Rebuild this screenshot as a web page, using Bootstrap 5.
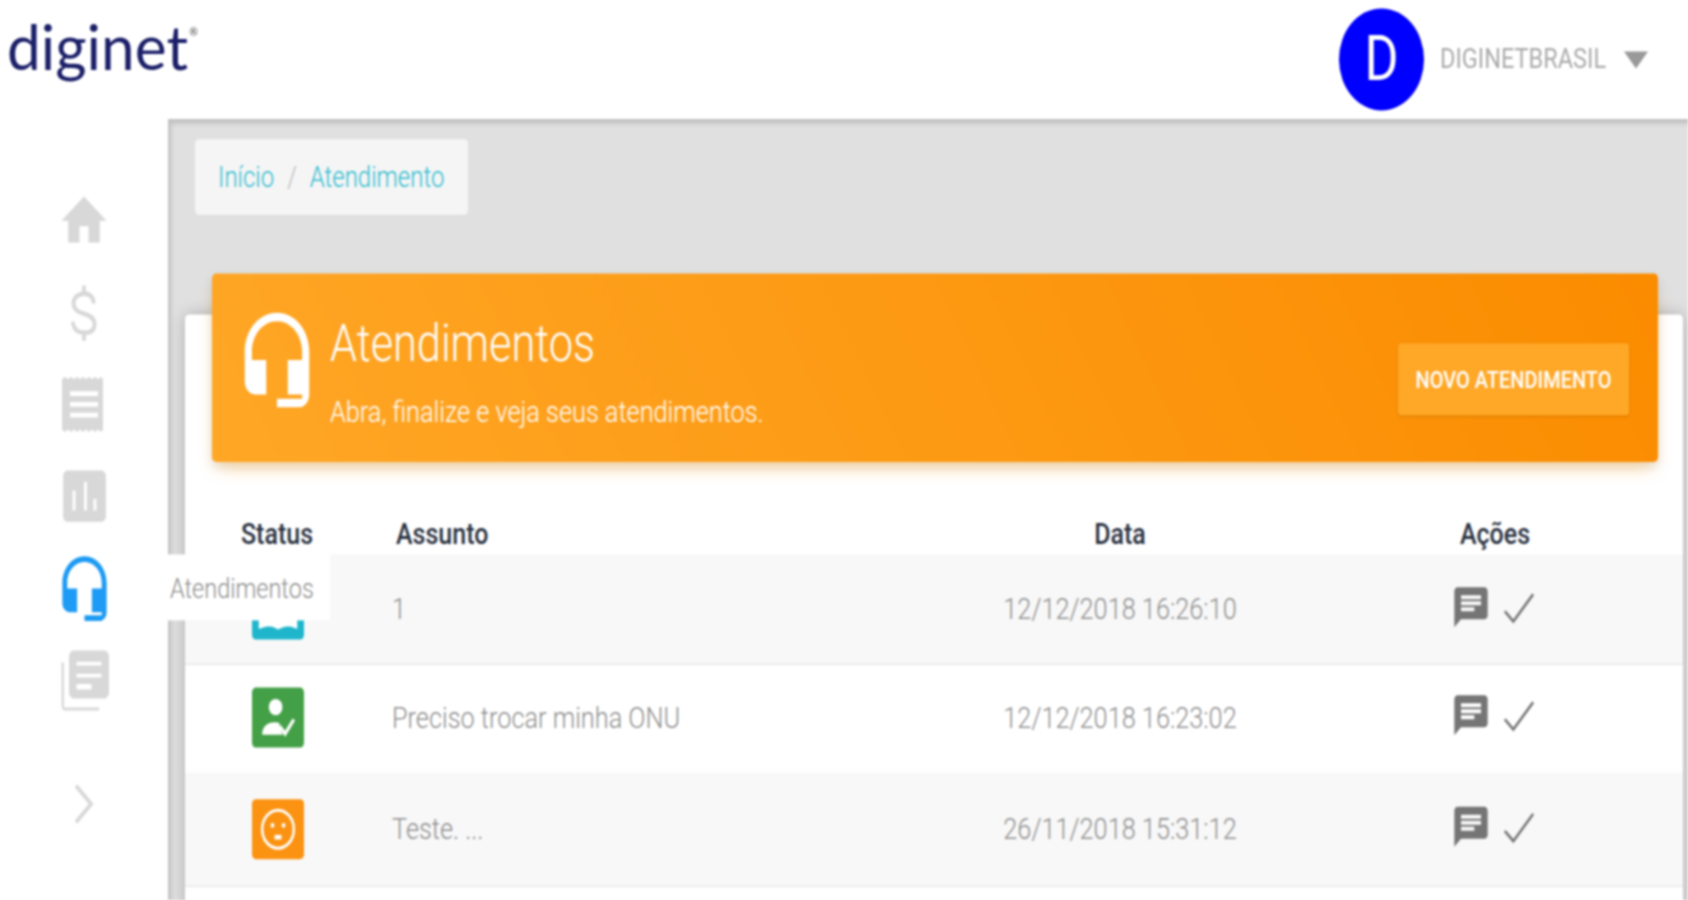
<!doctype html>
<html lang="pt-BR">
<head>
<meta charset="utf-8">
<title>Atendimentos</title>
<link rel="stylesheet" href="https://cdn.jsdelivr.net/npm/bootstrap@5.3.0/dist/css/bootstrap.min.css">
<style>
html,body{height:900px;overflow:hidden;background:#fff;margin:0}
body{font-family:Roboto,"Liberation Sans",sans-serif}
.stage{width:1688px;height:750px;transform:scaleY(1.2);transform-origin:0 0;filter:blur(1px);overflow:hidden;position:relative}
.topbar{height:99px;padding:0 40px 0 7px}
.logo-text{font-family:Lato,"Open Sans",sans-serif;font-weight:400;font-size:52px;line-height:1.2;color:#1b1f68;transform:scaleX(1.16);transform-origin:0 50%;margin-top:-22px;white-space:nowrap}
.logo-reg{font-size:9px;color:#777;vertical-align:28px;font-weight:700;margin-left:1px}
.avatar{width:85px;height:85px;border-radius:50%;background:#00f;color:#fff;font-size:52px;font-weight:400;line-height:85px;text-align:center}
.user-name{font-size:23.5px;font-weight:400;color:#aaa;margin-left:16px;width:165px;white-space:nowrap}
.caret-down{width:0;height:0;border-left:12px solid transparent;border-right:12px solid transparent;border-top:14px solid #999;margin-left:19px}
.side{width:168px;flex:none;padding-top:47px}
.side-slot{height:76.5px;color:#d8d8d8}
.side-slot.active{color:#1e9bf4}
.side-more{margin-top:45px;height:40px;color:#d8d8d8}
.mainarea{background:#e0e0e0;height:651px;padding:17px 5px 0 17px;box-shadow:inset 3px 4px 4px rgba(0,0,0,.14)}
.crumbs{display:inline-flex;background:#f5f5f5;height:63px;align-items:center;margin:0 0 0 10px;padding:0 24px 0 23px;border-radius:4px;font-size:24px;font-weight:300}
.crumbs .breadcrumb-item a{color:#31bcd0;text-decoration:none}
.crumbs .breadcrumb-item+.breadcrumb-item{padding-left:13px}
.crumbs .breadcrumb-item+.breadcrumb-item::before{color:#bbb;padding-right:13px}
.sheet{margin-top:83px;background:#fff;border-radius:4px;height:600px;box-shadow:0 0 14px rgba(0,0,0,.22)}
.hero{position:relative;top:-34px;margin:0 25px 0 27px;height:157px;border-radius:4px;background:linear-gradient(60deg,#ffa726,#fb8c00);box-shadow:0 10px 16px -6px rgba(255,152,0,.4),0 4px 10px rgba(0,0,0,.1);color:#fff;padding:0 29px 0 22px}
.hero-mark{flex:none;margin-bottom:14px}
.hero-copy{padding-top:7.8px;margin-left:10px}
.hero-title{font-size:43.3px;font-weight:300;line-height:1;margin:0 0 22.8px}
.hero-sub{font-size:25.3px;font-weight:300;line-height:1;margin:0;white-space:nowrap}
.hero-btn{background:#ffa726;color:#fff;border:0;border-radius:3px;width:231px;height:60px;font-size:20px;font-weight:500;padding:0;margin-top:18px;box-shadow:0 1px 3px rgba(0,0,0,.1);white-space:nowrap}
.ticket-table{table-layout:fixed;width:100%;margin:8.2px 0 0;--bs-table-bg:transparent}
.ticket-table th{font-size:25px;line-height:35.3px;font-weight:500;color:#2a3242;border:0;padding:0;height:35.3px;vertical-align:middle}
.ticket-table td{font-size:25.3px;font-weight:300;color:#8f8f8f;padding:0;vertical-align:middle;border-bottom:1px solid #e3e3e3;height:91px}
.ticket-table tr.odd td{background:#f8f8f8}
.ticket-table tr.even td{border-bottom-color:#fff;height:90px}
.ticket-table tr.last td{height:95px}
.ticket-table th.head-subject{padding-left:27px}
.ticket-table td.cell-subject{padding-left:23px}
.status-box{width:52px;height:50px;border-radius:4px;margin:0 auto;color:#fff;transform:translateX(1px)}
.status-teal{background:#1fb6cc}.status-green{background:#43a047}.status-orange{background:#fb9211}
.row-actions{gap:11px;padding-right:3px}
.chat-mark{margin-bottom:4px}
.hint{position:absolute;left:168px;top:462px;width:162px;height:55px;background:#fff;color:#8e8e8e;font-size:23.5px;font-weight:300;padding:3px 0 0 2px;z-index:5;white-space:nowrap}
</style>
</head>
<body>
<div class="stage">
  <header class="topbar d-flex align-items-center justify-content-between">
    <div class="logo-text">diginet<span class="logo-reg">®</span></div>
    <div class="d-flex align-items-center">
      <div class="avatar">D</div>
      <div class="user-name">DIGINETBRASIL</div>
      <div class="caret-down"></div>
    </div>
  </header>
  <div class="d-flex">
    <nav class="side">
      <div class="side-slot d-flex align-items-center justify-content-center">
        <svg width="54" height="54" viewBox="0 0 24 24" fill="currentColor"><path d="M10 20v-6h4v6h5v-8h3L12 3 2 12h3v8z"/></svg>
      </div>
      <div class="side-slot d-flex align-items-center justify-content-center">
        <svg width="30" height="46" viewBox="0 0 30 48" fill="none" stroke="currentColor" stroke-width="4" stroke-linecap="round"><path d="M25 14c-1-5-5-7-10-7S4 10 4 15c0 6 5 8 11 9.500S26 28 26 33.500C26 39 21 41 15 41S5 39 3.500 33"/><path d="M15 1v6M15 41v6"/></svg>
      </div>
      <div class="side-slot d-flex align-items-center justify-content-center">
        <svg width="44" height="46" viewBox="0 0 44 46" fill="currentColor"><path d="M0 2l3-2 3 2 3-2 3 2 3-2 3 2 3-2 3 2 3-2 3 2 3-2 3 2 3-2 2 2v42l-2 2-3-2-3 2-3-2-3 2-3-2-3 2-3-2-3 2-3-2-3 2-3-2-3 2-3-2z"/><path fill="#fff" d="M8 12h28v4H8zM8 21h28v4H8zM8 30h28v4H8z"/></svg>
      </div>
      <div class="side-slot d-flex align-items-center justify-content-center">
        <svg width="57" height="57" viewBox="0 0 24 24" fill="currentColor"><path d="M19 3H5c-1.100 0-2 .9-2 2v14c0 1.100.9 2 2 2h14c1.100 0 2-.9 2-2V5c0-1.100-.9-2-2-2zM9 17H7v-7h1.200v7zm4 0h-1.200V7H13v10zm4 0h-1.200v-4H17v4z"/></svg>
      </div>
      <div class="side-slot active d-flex align-items-center justify-content-center">
        <svg width="59" height="59" viewBox="0 0 24 24" fill="currentColor"><path d="M12 1c-4.970 0-9 4.030-9 9v7c0 1.660 1.340 3 3 3h3v-8H5v-2c0-3.870 3.130-7 7-7s7 3.130 7 7v2h-4v8h4v1h-7v2h6c1.660 0 3-1.340 3-3V10c0-4.970-4.030-9-9-9z"/></svg>
      </div>
      <div class="side-slot d-flex align-items-center justify-content-center">
        <svg width="60" height="60" viewBox="0 0 24 24" fill="currentColor"><path d="M4 6H3v14c0 1.100.4 2 1.500 2H18v-1H4V6zm16-4H8c-1.100 0-2 .9-2 2v12c0 1.100.9 2 2 2h12c1.100 0 2-.9 2-2V4c0-1.100-.9-2-2-2zm-1 9H9v-1.200h10V11zm-4 4H9v-1.800h6V15zm4-8H9V5.800h10V7z"/></svg>
      </div>
      <div class="side-more d-flex align-items-center justify-content-center">
        <svg width="20" height="34" viewBox="0 0 22 38" fill="none" stroke="currentColor" stroke-width="4"><path d="M2 2l17 17L2 36"/></svg>
      </div>
    </nav>
    <main class="mainarea flex-grow-1">
      <nav aria-label="breadcrumb">
        <ol class="breadcrumb crumbs">
          <li class="breadcrumb-item"><a href="#">Início</a></li>
          <li class="breadcrumb-item"><a href="#">Atendimento</a></li>
        </ol>
      </nav>
      <section class="sheet">
        <div class="hero d-flex align-items-center">
          <svg width="86" height="86" viewBox="0 0 24 24" fill="currentColor" class="hero-mark"><path d="M12 1c-4.970 0-9 4.030-9 9v7c0 1.660 1.340 3 3 3h3v-8H5v-2c0-3.870 3.130-7 7-7s7 3.130 7 7v2h-4v8h4v1h-7v2h6c1.660 0 3-1.340 3-3V10c0-4.970-4.030-9-9-9z"/></svg>
          <div class="hero-copy flex-grow-1">
            <h1 class="hero-title">Atendimentos</h1>
            <p class="hero-sub">Abra, finalize e veja seus atendimentos.</p>
          </div>
          <button class="btn hero-btn" type="button">NOVO ATENDIMENTO</button>
        </div>
        <table class="table ticket-table">
          <colgroup><col style="width:184px"><col style="width:564px"><col style="width:374px"><col></colgroup>
          <thead>
            <tr><th class="text-center">Status</th><th class="head-subject">Assunto</th><th class="text-center">Data</th><th class="text-center">Ações</th></tr>
          </thead>
          <tbody>
            <tr class="odd">
              <td><div class="status-box status-teal d-flex align-items-center justify-content-center"><svg width="42" height="42" viewBox="0 0 24 24" fill="currentColor"><path d="M21 5c-1.110-.35-2.330-.5-3.500-.5-1.950 0-4.050.4-5.500 1.500-1.450-1.100-3.550-1.500-5.500-1.500S2.450 4.900 1 6v14.650c0 .25.25.5.5.5.1 0 .15-.05.25-.05C3.100 20.450 5.050 20 6.500 20c1.950 0 4.050.4 5.500 1.500 1.350-.85 3.800-1.500 5.500-1.500 1.650 0 3.350.3 4.750 1.050.1.05.15.05.25.05.25 0 .5-.25.5-.5V6c-.6-.45-1.250-.75-2-1z"/></svg></div></td>
              <td class="cell-subject">1</td>
              <td class="text-center">12/12/2018 16:26:10</td>
              <td><div class="d-flex justify-content-center align-items-center row-actions">
                <svg class="chat-mark" width="40" height="40" viewBox="0 0 24 24" fill="#757575"><path d="M20 2H4c-1.100 0-2 .9-2 2v18l4-4h14c1.100 0 2-.9 2-2V4c0-1.100-.9-2-2-2zM6 9h12v2H6V9zm8 5H6v-2h8v2zm4-6H6V6h12v2z"/></svg>
                <svg width="34" height="34" viewBox="0 0 24 24" fill="none" stroke="#757575" stroke-width="1.700"><path d="M2 13l6 6L22 3"/></svg>
              </div></td>
            </tr>
            <tr class="even">
              <td><div class="status-box status-green d-flex align-items-center justify-content-center"><svg width="38" height="38" viewBox="0 0 24 24" fill="currentColor"><circle cx="10.500" cy="6.500" r="4.300"/><path d="M2 21c0-4 3-6.500 8-6.500 1 0 2 .1 3 .4-.3 1.800.3 3.500 2 6.100z"/><path d="M13 16.500l3.500 4L22 13" fill="none" stroke="currentColor" stroke-width="2"/></svg></div></td>
              <td class="cell-subject">Preciso trocar minha ONU</td>
              <td class="text-center">12/12/2018 16:23:02</td>
              <td><div class="d-flex justify-content-center align-items-center row-actions">
                <svg class="chat-mark" width="40" height="40" viewBox="0 0 24 24" fill="#757575"><path d="M20 2H4c-1.100 0-2 .9-2 2v18l4-4h14c1.100 0 2-.9 2-2V4c0-1.100-.9-2-2-2zM6 9h12v2H6V9zm8 5H6v-2h8v2zm4-6H6V6h12v2z"/></svg>
                <svg width="34" height="34" viewBox="0 0 24 24" fill="none" stroke="#757575" stroke-width="1.700"><path d="M2 13l6 6L22 3"/></svg>
              </div></td>
            </tr>
            <tr class="odd last">
              <td><div class="status-box status-orange d-flex align-items-center justify-content-center"><svg width="38" height="38" viewBox="0 0 24 24" fill="none" stroke="currentColor" stroke-width="1.600"><circle cx="12" cy="12" r="10"/><circle cx="8.500" cy="10" r="1.200" fill="currentColor" stroke="none"/><circle cx="15.500" cy="10" r="1.200" fill="currentColor" stroke="none"/><rect x="9.800" y="15" width="4.400" height="2.400" fill="currentColor" stroke="none"/></svg></div></td>
              <td class="cell-subject">Teste. ...</td>
              <td class="text-center">26/11/2018 15:31:12</td>
              <td><div class="d-flex justify-content-center align-items-center row-actions">
                <svg class="chat-mark" width="40" height="40" viewBox="0 0 24 24" fill="#757575"><path d="M20 2H4c-1.100 0-2 .9-2 2v18l4-4h14c1.100 0 2-.9 2-2V4c0-1.100-.9-2-2-2zM6 9h12v2H6V9zm8 5H6v-2h8v2zm4-6H6V6h12v2z"/></svg>
                <svg width="34" height="34" viewBox="0 0 24 24" fill="none" stroke="#757575" stroke-width="1.700"><path d="M2 13l6 6L22 3"/></svg>
              </div></td>
            </tr>
          </tbody>
        </table>
      </section>
    </main>
  </div>
  <div class="hint d-flex align-items-center" role="tooltip">Atendimentos</div>
</div>
<script src="https://cdn.jsdelivr.net/npm/bootstrap@5.3.0/dist/js/bootstrap.bundle.min.js"></script>
</body>
</html>
